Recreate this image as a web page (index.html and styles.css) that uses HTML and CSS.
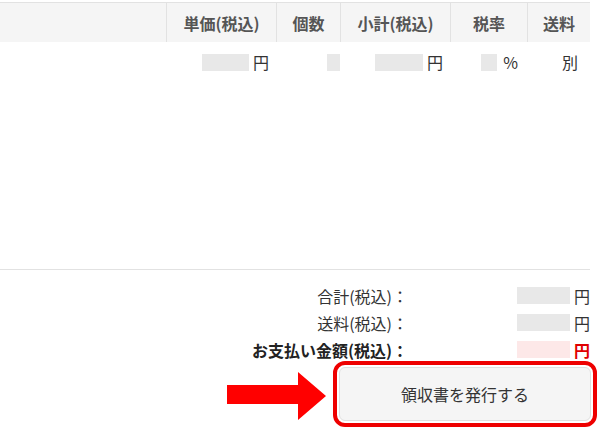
FILE: index.html
```html
<!DOCTYPE html>
<html lang="ja">
<head>
  <meta charset="UTF-8" />
  <meta name="viewport" content="width=device-width, initial-scale=1.0"/>
  <title>注文内容</title>
  <link rel="stylesheet" href="styles.css">
</head>
<body>

  <div class="order">
    <div class="items">
      <div class="row head">
        <div class="cell"></div>
        <div class="cell">単価(税込)</div>
        <div class="cell">個数</div>
        <div class="cell">小計(税込)</div>
        <div class="cell">税率</div>
        <div class="cell">送料</div>
      </div>
      <div class="row body">
        <div class="cell"></div>
        <div class="cell yen"><span class="blank w47"></span>円</div>
        <div class="cell qty"><span class="blank w13"></span></div>
        <div class="cell yen"><span class="blank w48"></span>円</div>
        <div class="cell rate"><span class="blank w16"></span>%</div>
        <div class="cell ship">別</div>
      </div>
    </div>

    <div class="totals">
      <div class="label">合計(税込)：</div>
      <div class="value"><span class="blank w53"></span>円</div>

      <div class="label">送料(税込)：</div>
      <div class="value"><span class="blank w53"></span>円</div>

      <div class="label strong">お支払い金額(税込)：</div>
      <div class="value pay"><span class="blank w53"></span>円</div>
    </div>

    <div class="actions">
      <svg class="arrow" width="100" height="48" viewBox="0 0 100 48">
        <polygon points="0,13 71,13 71,0 99,24 71,48 71,32 0,32" fill="#ff0000"/>
      </svg>
      <div class="highlight">
        <button class="issue">領収書を発行する</button>
      </div>
    </div>
  </div>

</body>
</html>
```

FILE: styles.css
```css
body {
  margin: 0;
  padding: 0;
  background: #fff;
  font-family: "Noto Sans CJK JP", "Noto Sans", sans-serif;
  color: #333;
}

.order {
  width: 590px;
  padding-top: 2px;
}

.items {
  height: 268px;
  border-top: 1px solid #e2e2e2;
  border-bottom: 1px solid #e2e2e2;
  box-sizing: border-box;
}

.row {
  display: grid;
  grid-template-columns: 166px 110px 64px 110px 77px 63px;
}

.head {
  background-color: #f5f5f5;
  height: 39px;
}

.head .cell {
  display: flex;
  align-items: center;
  justify-content: center;
  font-size: 16px;
  font-weight: bold;
  color: #555;
  border-left: 1px solid #e2e2e2;
}

.head .cell:first-child {
  border-left: none;
}

.body .cell {
  display: flex;
  align-items: center;
  justify-content: flex-end;
  height: 40px;
  font-size: 16px;
  padding-right: 9px;
}

.body .yen {
  padding-right: 7px;
}

.body .qty {
  padding-right: 0;
}

.body .ship {
  padding-right: 12px;
}

.blank {
  display: inline-block;
  height: 17px;
  background-color: #e8e8e8;
  margin-right: 4px;
}

.w13 { width: 13px; margin-right: 0; }
.w16 { width: 16px; margin-right: 6px; }
.w47 { width: 47px; }
.w48 { width: 48px; }
.w53 { width: 53px; }

.totals {
  display: grid;
  grid-template-columns: 408px 182px;
  grid-auto-rows: 27px;
  padding-top: 12px;
  font-size: 16px;
}

.label {
  display: flex;
  align-items: center;
  justify-content: flex-end;
}

.label.strong {
  font-weight: bold;
  color: #222;
}

.value {
  display: flex;
  align-items: center;
  justify-content: flex-end;
  font-size: 16px;
}

.value.pay {
  color: #e00000;
  font-weight: bold;
}

.value.pay .blank {
  background-color: #fde8e8;
}

.actions {
  display: flex;
  align-items: center;
  justify-content: flex-end;
  margin-top: -2px;
  margin-right: -7px;
}

.arrow {
  margin-right: 6px;
  margin-top: 4px;
}

.highlight {
  border: 4px solid #ee0000;
  border-radius: 12px;
  padding: 2px;
  background: #fff;
}

.issue {
  width: 252px;
  height: 54px;
  background-color: #f5f5f5;
  border: 1px solid #e0e0e0;
  border-radius: 6px;
  font-family: "Noto Sans CJK JP", sans-serif;
  font-size: 16px;
  color: #333;
  cursor: pointer;
}
```
